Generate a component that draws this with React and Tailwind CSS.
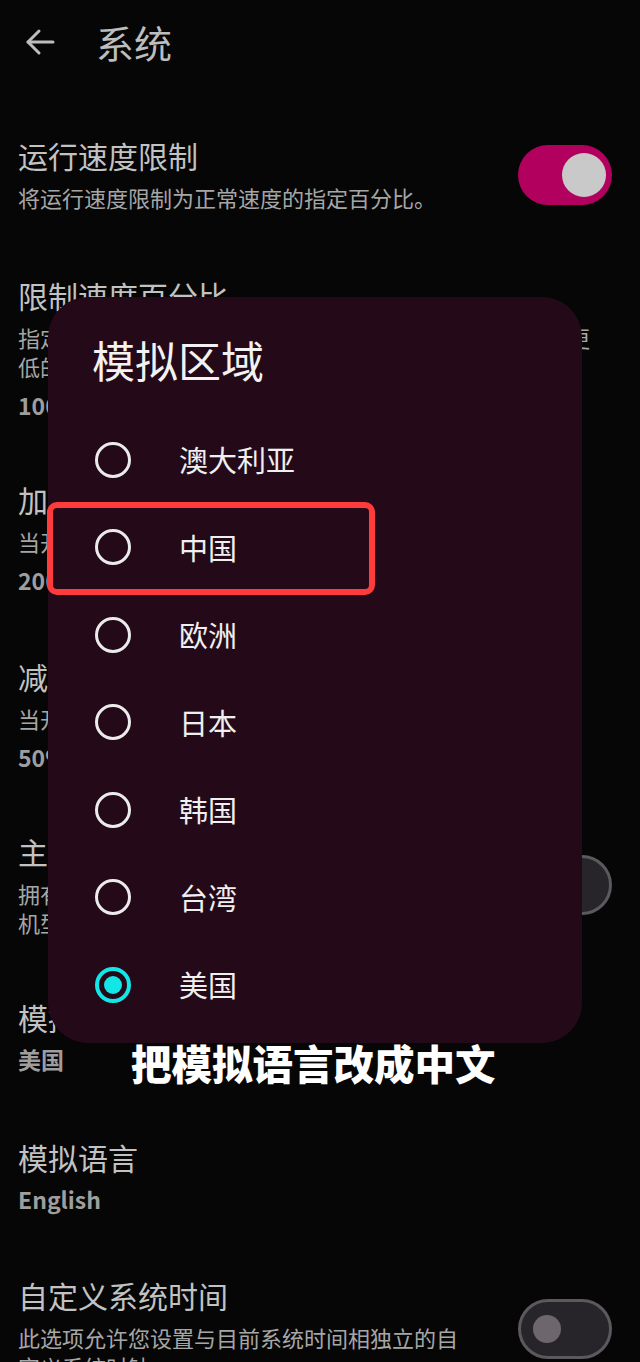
import React from "react";

const CJK = { fontFamily: '"Noto Sans CJK SC", "Noto Sans", sans-serif' };

function ToggleOn() {
  return (
    <div className="flex h-[60px] w-[94px] shrink-0 items-center justify-end rounded-full bg-[#b1005d] pr-[6px]">
      <div className="h-[44px] w-[44px] rounded-full bg-[#c9c9c9]" />
    </div>
  );
}

function ToggleOff() {
  return (
    <div className="flex h-[60px] w-[94px] shrink-0 items-center rounded-full border-[3px] border-[#5b595e] bg-[#27252a] pl-[12px]">
      <div className="h-[28px] w-[28px] rounded-full bg-[#6d676d]" />
    </div>
  );
}

function Setting({ title, lines = [], value, toggle, className = "py-[31px]" }) {
  return (
    <div className={`flex items-center justify-between pl-[18px] pr-[28px] ${className}`}>
      <div className="flex flex-col">
        <div className="h-[36px] text-[30px] leading-[36px] whitespace-nowrap text-[#c2c2c2]">{title}</div>
        {lines.length > 0 && (
          <div className="mt-[10px] flex flex-col">
            {lines.map((l) => (
              <div key={l} className="h-[29px] text-[22px] leading-[29px] whitespace-nowrap text-[#a6a6a6]">{l}</div>
            ))}
          </div>
        )}
        {value && (
          <div className="mt-[8px] h-[32px] text-[23px] font-bold leading-[32px] text-[#9e9e9e]">{value}</div>
        )}
      </div>
      {toggle === "on" && <ToggleOn />}
      {toggle === "off" && <ToggleOff />}
    </div>
  );
}

function Radio({ checked }) {
  if (checked) {
    return (
      <div className="flex h-[36px] w-[36px] items-center justify-center rounded-full border-[4px] border-[#13e6e6]">
        <div className="h-[18px] w-[18px] rounded-full bg-[#13e6e6]" />
      </div>
    );
  }
  return <div className="h-[36px] w-[36px] rounded-full border-[3px] border-[#ebebeb]" />;
}

const regions = ["澳大利亚", "中国", "欧洲", "日本", "韩国", "台湾", "美国"];

export default function App() {
  return (
    <div className="relative h-[1362px] w-[640px] overflow-hidden bg-[#060606]" style={CJK}>
      {/* header */}
      <div className="flex h-[84px] items-center gap-[40px] pl-[24px]">
        <svg width="32" height="32" viewBox="0 0 32 32" fill="none" stroke="#bdbdbd" strokeWidth="3" strokeLinecap="round" strokeLinejoin="round">
          <path d="M29 16H4" />
          <path d="M15 5L4 16l11 11" />
        </svg>
        <div className="text-[38px] leading-none text-[#bdbdbd]">系统</div>
      </div>

      <div className="mt-[22px] flex flex-col">
        <Setting
          title="运行速度限制"
          lines={["将运行速度限制为正常速度的指定百分比。"]}
          toggle="on"
          className="pt-[31px] pb-[34px]"
        />
        <Setting
          title="限制速度百分比"
          lines={["指定运行速度限制的百分比。数值越高，运行速度越快，更", "低的数值会使运行速度变慢。"]}
          value="100%"
          className="pt-[31px] pb-[29px]"
        />
        <Setting title="加速速度百分比" lines={["当开启加速时使用的速度百分比。"]} value="200%" />
        <Setting
          title="减速速度百分比"
          lines={["当开启减速时使用的速度百分比。"]}
          value="50%"
          className="pt-[31px] pb-[29px]"
        />
        <Setting
          title="主机模式"
          lines={["拥有此选项时，将模拟底座模式运行游戏，部分", "机型可能需要重新启动。"]}
          toggle="off"
        />
        <Setting title="模拟区域" value="美国" className="pt-[31px] pb-[33px]" />
        <Setting title="模拟语言" value="English" />
        <Setting
          title="自定义系统时间"
          lines={["此选项允许您设置与目前系统时间相独立的自", "定义系统时钟。"]}
          toggle="off"
        />
      </div>

      {/* dialog */}
      <div className="absolute left-[48px] top-[297px] w-[534px] rounded-[40px] bg-[#240a19] pb-[14px] pl-[47px] pr-[40px] pt-[38px]">
        <div className="-ml-[3px] text-[43px] leading-[48px] text-[#f2f2f2]">模拟区域</div>
        <div className="mt-[33px] flex flex-col">
          {regions.map((r) => (
            <div key={r} className="flex h-[87.5px] items-center gap-[48px]">
              <Radio checked={r === "美国"} />
              <div className="text-[29px] leading-none text-[#efefef]">{r}</div>
            </div>
          ))}
        </div>
      </div>

      {/* highlight box */}
      <div className="absolute left-[47px] top-[502px] h-[93px] w-[328px] rounded-[10px] border-[6px] border-[#ff3b3b]" />

      {/* caption */}
      <div className="absolute left-[131px] top-[1038px] whitespace-nowrap text-[40.5px] font-black leading-[50px] text-white">
        把模拟语言改成中文
      </div>
    </div>
  );
}
